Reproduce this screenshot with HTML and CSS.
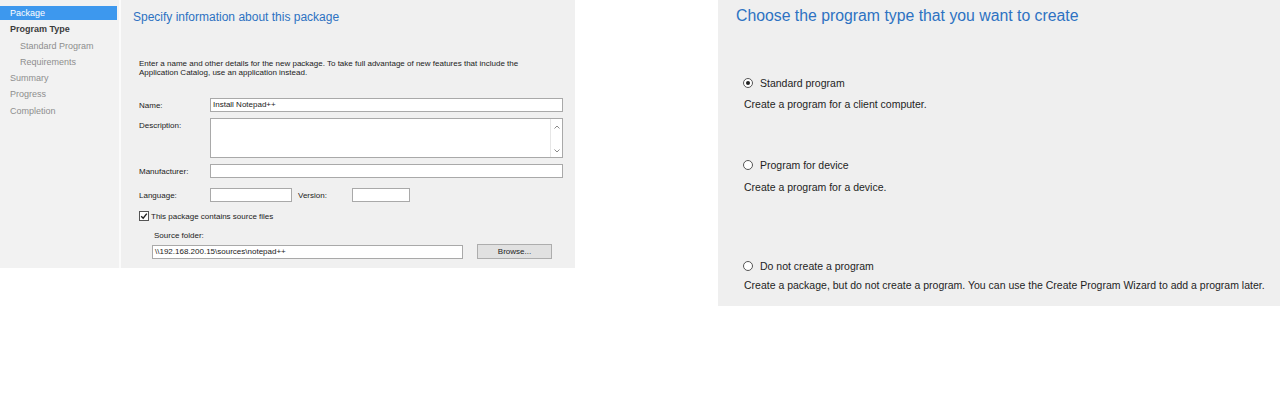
FILE: index.html
```html
<!DOCTYPE html>
<html>
<head>
<meta charset="utf-8">
<link rel="stylesheet" href="styles.css">
</head>
<body>
<div class="page">
  <div class="wizard">
    <nav class="nav">
      <div class="nav-item active">Package</div>
      <div class="nav-item bold">Program Type</div>
      <div class="nav-item sub">Standard Program</div>
      <div class="nav-item sub">Requirements</div>
      <div class="nav-item">Summary</div>
      <div class="nav-item">Progress</div>
      <div class="nav-item">Completion</div>
    </nav>
    <div class="main">
      <h1 class="title-small">Specify information about this package</h1>
      <p class="intro">Enter a name and other details for the new package. To take full advantage of new features that include the<br>Application Catalog, use an application instead.</p>
      <div class="form">
        <div class="row r-name">
          <span class="label">Name:</span>
          <div class="field wide">Install Notepad++</div>
        </div>
        <div class="row r-desc">
          <span class="label top">Description:</span>
          <div class="field wide area">
            <div class="scroll">
              <svg width="8" height="6" viewBox="0 0 8 6"><path d="M1.5 4.5 L4 2 L6.5 4.5" fill="none" stroke="#8a8a8a" stroke-width="1"/></svg>
              <svg width="8" height="6" viewBox="0 0 8 6"><path d="M1.5 1.5 L4 4 L6.5 1.5" fill="none" stroke="#8a8a8a" stroke-width="1"/></svg>
            </div>
          </div>
        </div>
        <div class="row r-manu">
          <span class="label">Manufacturer:</span>
          <div class="field wide"></div>
        </div>
        <div class="row r-lang">
          <span class="label">Language:</span>
          <div class="field lang"></div>
          <span class="label ver">Version:</span>
          <div class="field version"></div>
        </div>
        <div class="row r-check">
          <span class="checkbox">
            <svg width="8" height="8" viewBox="0 0 8 8"><path d="M1.2 4.2 L3.2 6.2 L6.8 1.6" fill="none" stroke="#222" stroke-width="1.4"/></svg>
          </span>
          <span class="check-label">This package contains source files</span>
        </div>
        <div class="source">
          <span class="label">Source folder:</span>
          <div class="source-row">
            <div class="field path">\\192.168.200.15\sources\notepad++</div>
            <div class="button">Browse...</div>
          </div>
        </div>
      </div>
    </div>
  </div>

  <div class="choose">
    <h1 class="title-large">Choose the program type that you want to create</h1>
    <div class="option o1">
      <div class="radio-line"><span class="radio checked"></span><span>Standard program</span></div>
      <div class="desc d1">Create a program for a client computer.</div>
    </div>
    <div class="option o2">
      <div class="radio-line"><span class="radio"></span><span>Program for device</span></div>
      <div class="desc d2">Create a program for a device.</div>
    </div>
    <div class="option o3">
      <div class="radio-line"><span class="radio"></span><span>Do not create a program</span></div>
      <div class="desc d3">Create a package, but do not create a program. You can use the Create Program Wizard to add a program later.</div>
    </div>
  </div>
</div>
</body>
</html>
```

FILE: styles.css
```css
* { box-sizing: border-box; }
html, body { margin: 0; padding: 0; background: #ffffff; }
body { font-family: "Liberation Sans", Arial, sans-serif; color: #1e1e1e; }

.page {
  display: flex;
  justify-content: space-between;
  align-items: flex-start;
  width: 1280px;
  height: 396px;
}

/* ---------- left wizard ---------- */
.wizard {
  display: flex;
  width: 575px;
  height: 268px;
  background: #f0f0f0;
}
.nav {
  flex: none;
  width: 121px;
  background: #f2f2f2;
  border-right: 2px solid #fbfbfb;
  padding-top: 6px;
}
.nav-item {
  height: 14px;
  line-height: 14px;
  margin-bottom: 2.3px;
  margin-right: 2px;
  padding-left: 10px;
  font-size: 9px;
  color: #8e8e8e;
}
.nav-item.active { background: #3d98ee; color: #ffffff; }
.nav-item.bold { font-weight: bold; color: #3c3c3c; }
.nav-item.sub { padding-left: 20px; }

.main {
  flex: 1;
  padding-left: 12px;
  background: #f0f0f0;
}
.title-small {
  margin: 8px 0 0 0;
  font-size: 12px;
  line-height: 18px;
  font-weight: normal;
  color: #2d72c2;
}
.intro {
  margin: 33px 0 0 6px;
  font-size: 8px;
  line-height: 9px;
  color: #222;
}
.form { margin-left: 6px; margin-top: 21px; }
.row { display: flex; align-items: center; }
.label { font-size: 8px; color: #222; width: 71px; flex: none; }
.label.top { align-self: flex-start; margin-top: 3px; }
.field {
  height: 14px;
  background: #ffffff;
  border: 1px solid #a9a9a9;
  font-size: 8px;
  line-height: 12px;
  padding-left: 2px;
  color: #222;
}
.wide { width: 353px; }
.r-desc { margin-top: 6px; }
.area { height: 40px; position: relative; }
.scroll {
  position: absolute;
  right: 0;
  top: 0;
  bottom: 0;
  width: 12px;
  display: flex;
  flex-direction: column;
  justify-content: space-between;
  align-items: center;
  padding: 5px 0 3px;
  border-left: 1px solid #e6e6e6;
}
.r-manu { margin-top: 6px; }
.r-lang { margin-top: 10px; }
.lang { width: 82px; }
.label.ver { margin-left: 6px; width: 54px; }
.version { width: 58px; }
.r-check { margin-top: 9px; }
.checkbox {
  width: 10px;
  height: 10px;
  border: 1px solid #555;
  background: #fff;
  display: flex;
  align-items: center;
  justify-content: center;
}
.check-label { font-size: 8px; margin-left: 2px; color: #222; }
.source { margin-left: 15px; margin-top: 10px; }
.source .label { display: block; width: auto; line-height: 9px; }
.source-row { display: flex; align-items: center; margin-top: 4px; margin-left: -2px; }
.path { width: 311px; }
.button {
  margin-left: 14px;
  width: 75px;
  height: 15px;
  background: #e1e1e1;
  border: 1px solid #adadad;
  font-size: 8px;
  line-height: 13px;
  text-align: center;
  color: #222;
}

/* ---------- right panel ---------- */
.choose {
  width: 562px;
  height: 306px;
  background: #efefef;
  padding-left: 18px;
}
.title-large {
  margin: 6px 0 0 0;
  font-size: 15.8px;
  line-height: 20px;
  font-weight: normal;
  color: #2d72c2;
}
.option { font-size: 10.5px; color: #1e1e1e; }
.radio-line { display: flex; align-items: center; margin-left: 7px; height: 12px; }
.radio {
  width: 10px;
  height: 10px;
  border-radius: 50%;
  border: 1px solid #555;
  background: #fff;
  margin-right: 7px;
  position: relative;
}
.radio.checked::after {
  content: "";
  position: absolute;
  left: 2px;
  top: 2px;
  width: 4px;
  height: 4px;
  border-radius: 50%;
  background: #222;
}
.desc { margin-left: 8px; line-height: 12px; }
.o1 { margin-top: 51px; }
.d1 { margin-top: 9px; }
.o2 { margin-top: 49px; }
.d2 { margin-top: 10px; }
.o3 { margin-top: 67px; }
.d3 { margin-top: 7px; }
```
